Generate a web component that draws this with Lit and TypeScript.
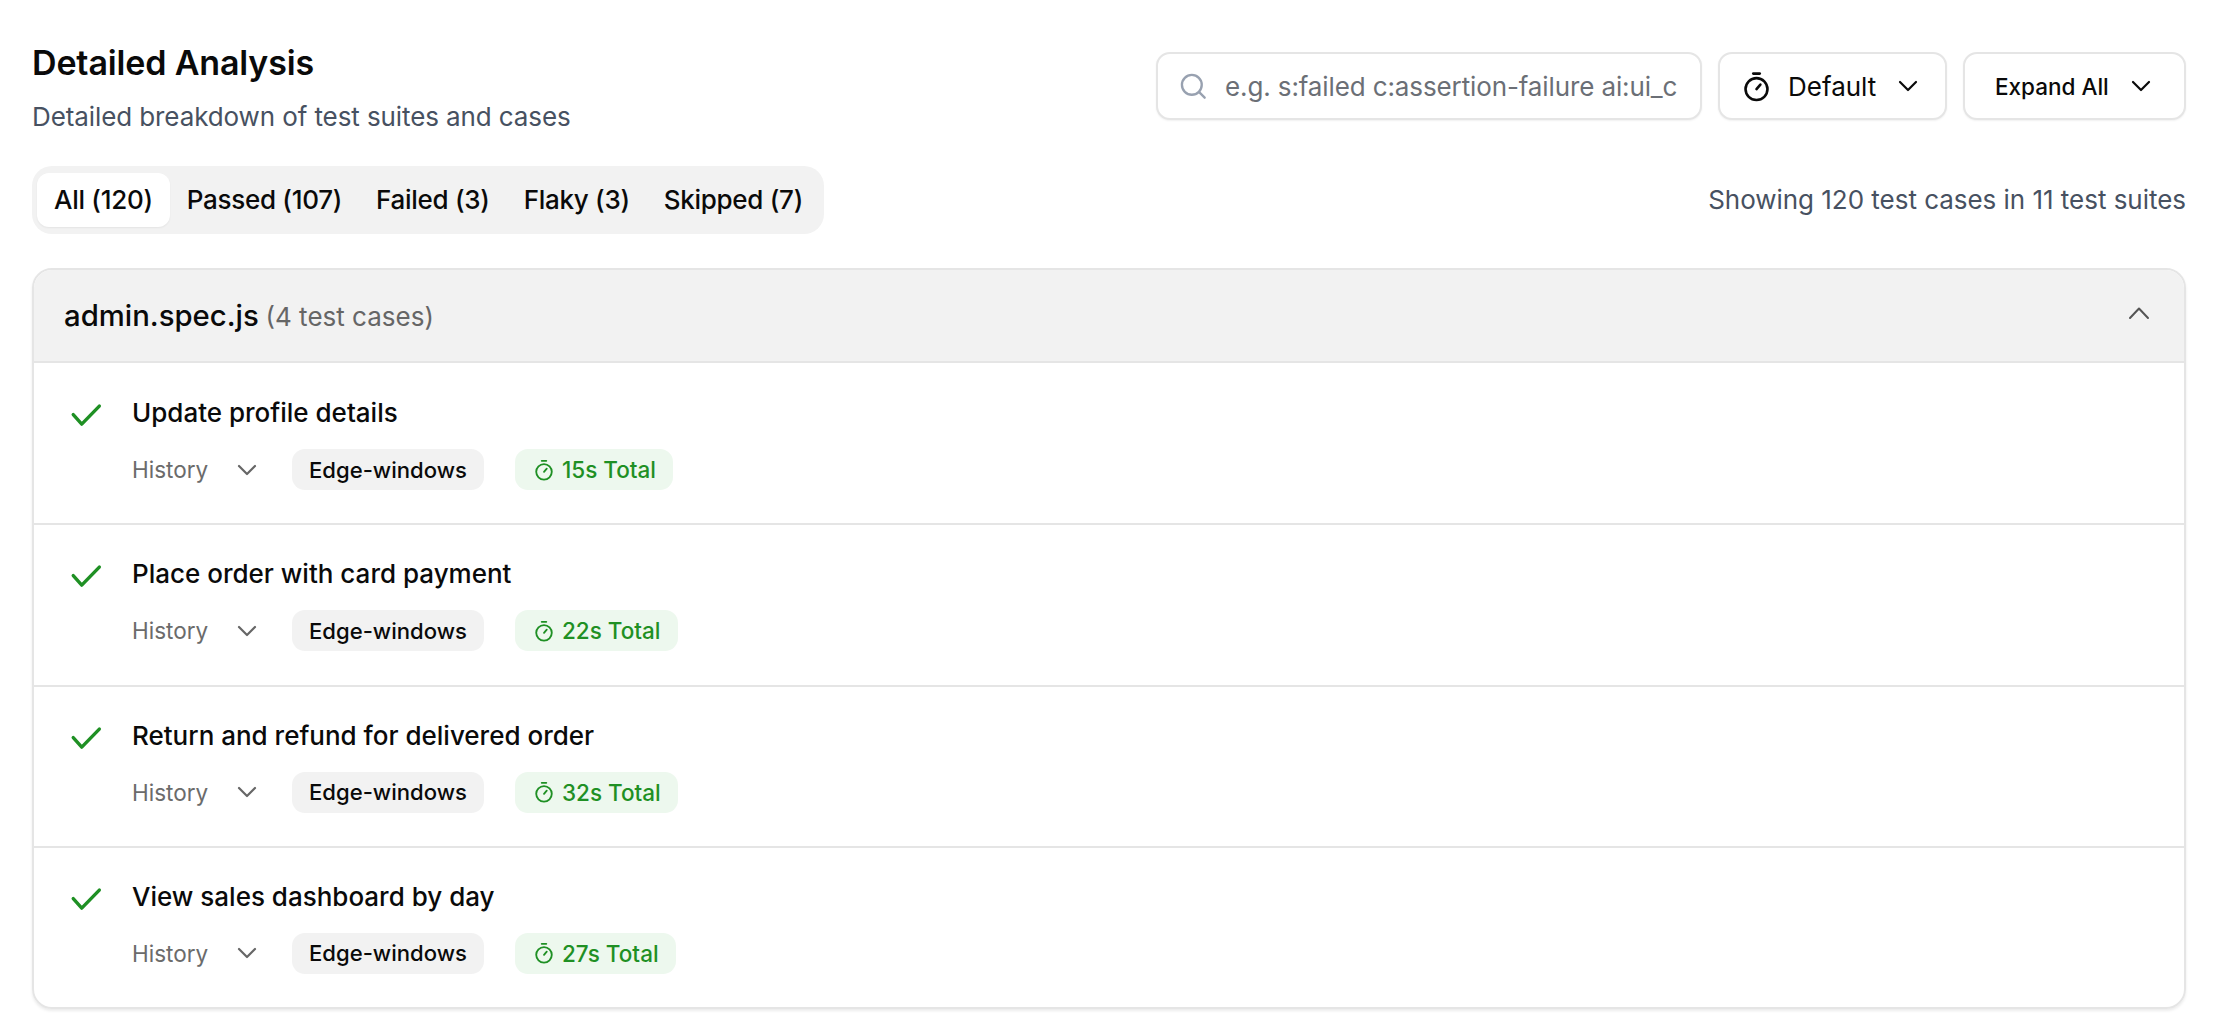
import { LitElement, html, css } from "lit";
import { customElement } from "lit/decorators.js";

const chevron = (up = false) => html`<svg class=${up ? "chev up" : "chev"} viewBox="0 0 24 24" fill="none" stroke="currentColor" stroke-linecap="round" stroke-linejoin="round"><path d=${up ? "M3 16l9-9.5 9 9.5" : "M4 8l8 8 8-8"}></path></svg>`;
const timer = html`<svg class="timer" viewBox="0 0 24 24" fill="none" stroke="currentColor" stroke-width="2" stroke-linecap="round" stroke-linejoin="round"><path d="M9.5 2h5"></path><circle cx="12" cy="14" r="8.5"></circle><path d="M12 14l3-3.5"></path></svg>`;

const cases = [
  { name: "Update profile details", time: "15s Total" },
  { name: "Place order with card payment", time: "22s Total" },
  { name: "Return and refund for delivered order", time: "32s Total" },
  { name: "View sales dashboard by day", time: "27s Total" },
];
const tabs = ["All (120)", "Passed (107)", "Failed (3)", "Flaky (3)", "Skipped (7)"];

@customElement("app-root")
export class AppRoot extends LitElement {
  static styles = css`
    :host { display: block; background: #fff; min-height: 1036px; box-sizing: border-box; padding: 44px 32px 0; font-family: Inter, "Liberation Sans", sans-serif; color: #0a0a0a; }
    * { box-sizing: border-box; }
    .top { display: flex; justify-content: space-between; align-items: flex-start; height: 122px; }
    h1 { margin: 0; font-size: 34px; line-height: 38px; font-weight: 600; letter-spacing: -0.15px; }
    .sub { margin: 19px 0 0; font-size: 26px; line-height: 32px; color: #475161; letter-spacing: -0.1px; }
    .tools { display: flex; gap: 16px; margin-top: 8px; }
    .box { height: 68px; background: #fff; border: 2px solid #e5e5e5; border-radius: 14px; box-shadow: 0 1px 2px rgba(0,0,0,.06); display: flex; align-items: center; }
    .search { width: 546px; padding: 0 22px 0 21px; gap: 18px; color: #98a1b0; }
    .search svg { width: 28px; height: 28px; flex: none; }
    input { flex: 1; min-width: 0; border: 0; outline: 0; padding: 0; background: none; font: inherit; font-size: 26px; letter-spacing: -0.12px; }
    input::placeholder { color: #6b6f76; opacity: 1; }
    .sort { width: 229px; padding: 0 0 0 21px; font-size: 26px; }
    .sort .timer { width: 31px; height: 31px; margin-right: 16px; }
    .chev { width: 24px; height: 24px; flex: none; stroke-width: 2.2; }
    .chev.up { stroke-width: 2; }
    .sort .chev { margin-left: 20px; }
    .expand { width: 223px; padding: 0 0 0 30px; font-size: 22.5px; font-weight: 500; }
    .expand .chev { margin-left: 20px; }
    .bar { display: flex; justify-content: space-between; align-items: center; height: 68px; }
    .tabs { display: flex; align-items: center; height: 68px; padding: 0 4px 0 5px; background: #f2f2f2; border-radius: 20px; }
    .tab { height: 54px; display: flex; align-items: center; padding: 0 17px 2px; font-size: 26px; font-weight: 500; border-radius: 12px; letter-spacing: -0.28px; }
    .tab.on { background: #fff; box-shadow: 0 1px 2px rgba(0,0,0,.06); }
    .count { font-size: 26px; color: #475161; letter-spacing: -0.03px; padding-bottom: 2px; }
    .card { margin-top: 34px; border: 2px solid #e5e5e5; border-radius: 20px; overflow: hidden; box-shadow: 0 2px 3px rgba(0,0,0,.08); }
    .head { height: 93px; background: #f2f2f2; border-bottom: 2px solid #e5e5e5; display: flex; align-items: center; justify-content: space-between; padding: 0 33px 0 30px; font-size: 29.3px; font-weight: 500; }
    .head small { font-size: 26px; font-weight: 400; color: #666; margin-left: -1px; }
    .head .chev { color: #555; margin-bottom: 4px; }
    .row { height: 161.3px; display: flex; gap: 29px; padding: 31px 0 0 35px; border-top: 2px solid #e5e5e5; }
    .head + .row { border-top-color: transparent; height: 160.3px; padding-top: 30px; }
    .check { width: 34px; height: 34px; color: #1f9024; flex: none; margin-top: 4px; }
    .name { font-size: 26px; line-height: 36px; font-weight: 500; }
    .meta { display: flex; align-items: center; margin-top: 18px; }
    .hist { display: flex; align-items: center; width: 160px; font-size: 22.5px; color: #6b6b6b; }
    .hist .chev { margin-left: 27px; color: #666; }
    .pill { height: 41px; display: flex; align-items: center; padding: 0 17px; border-radius: 13px; font-size: 22.1px; font-weight: 500; background: #f2f2f2; }
    .green { margin-left: 31px; background: #edf8ee; color: #1f9024; gap: 7px; padding: 0 17px 0 18px; font-size: 22.5px; }
    .green .timer { width: 22px; height: 22px; }
  `;

  render() {
    return html`
      <div class="top">
        <div>
          <h1>Detailed Analysis</h1>
          <p class="sub">Detailed breakdown of test suites and cases</p>
        </div>
        <div class="tools">
          <label class="box search">
            <svg viewBox="0 0 24 24" fill="none" stroke="currentColor" stroke-width="2" stroke-linecap="round"><circle cx="11" cy="11" r="8.5"></circle><path d="M17.5 17.5L22 22"></path></svg>
            <input placeholder="e.g. s:failed c:assertion-failure ai:ui_change" />
          </label>
          <div class="box sort">${timer}<span>Default</span>${chevron()}</div>
          <div class="box expand"><span>Expand All</span>${chevron()}</div>
        </div>
      </div>
      <div class="bar">
        <div class="tabs">${tabs.map((t, i) => html`<div class="tab ${i === 0 ? "on" : ""}">${t}</div>`)}</div>
        <div class="count">Showing 120 test cases in 11 test suites</div>
      </div>
      <section class="card">
        <div class="head"><div>admin.spec.js <small>(4 test cases)</small></div>${chevron(true)}</div>
        ${cases.map((c) => html`
          <div class="row">
            <svg class="check" viewBox="0 0 24 24" fill="none" stroke="currentColor" stroke-width="2.4" stroke-linecap="round" stroke-linejoin="round"><path d="M3 11l6 6.7L21.4 5"></path></svg>
            <div>
              <div class="name">${c.name}</div>
              <div class="meta">
                <div class="hist"><span>History</span>${chevron()}</div>
                <div class="pill">Edge-windows</div>
                <div class="pill green">${timer}<span>${c.time}</span></div>
              </div>
            </div>
          </div>`)}
      </section>
    `;
  }
}
